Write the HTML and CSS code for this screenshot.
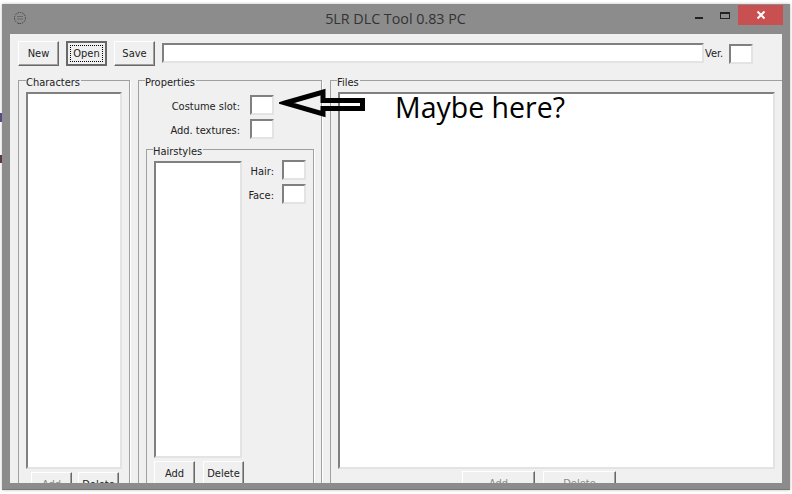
FILE: index.html
```html
<!DOCTYPE html>
<html lang="en">
<head>
    <meta charset="UTF-8">
    <meta name="viewport" content="width=device-width, initial-scale=1.0">
    <title>5LR DLC Tool 0.83 PC</title>
    <link rel="stylesheet" href="styles.css">
</head>
<body>
    <div class="window">
        <div class="titlebar">
            <svg class="app-icon" width="14" height="14" viewBox="0 0 14 14">
                <circle cx="7" cy="7" r="5.5" fill="none" stroke="#444" stroke-dasharray="1.5 1"/>
                <path d="M4.5 5.5h5M4.5 8h5M5 12.5h4" stroke="#444" stroke-dasharray="1 1" fill="none"/>
            </svg>
            <div class="title">5LR DLC Tool 0.83 PC</div>
            <div class="win-buttons">
                <div class="win-btn"><div class="min-glyph"></div></div>
                <div class="win-btn"><div class="max-glyph"></div></div>
                <div class="close-btn">
                    <svg width="10" height="10" viewBox="0 0 10 10"><path d="M1.5 1.5l7 7M8.5 1.5l-7 7" stroke="#fff" stroke-width="2"/></svg>
                </div>
            </div>
        </div>
        <div class="client">
            <div class="toolbar">
                <div class="btn">New</div>
                <div class="btn default"><span>Open</span></div>
                <div class="btn">Save</div>
                <div class="field path"></div>
                <div class="ver-label">Ver.</div>
                <div class="field small"></div>
            </div>
            <div class="panels">
                <div class="group characters">
                    <div class="legend">Characters</div>
                    <div class="field list"></div>
                    <div class="list-buttons">
                        <div class="btn disabled">Add</div>
                        <div class="btn">Delete</div>
                    </div>
                </div>
                <div class="group properties">
                    <div class="legend">Properties</div>
                    <div class="prop-row"><span>Costume slot:</span><div class="field small"></div></div>
                    <div class="prop-row"><span>Add. textures:</span><div class="field small"></div></div>
                    <div class="group hairstyles">
                        <div class="legend">Hairstyles</div>
                        <div class="hair-top">
                            <div class="field hair-list"></div>
                            <div class="hair-side">
                                <div class="prop-row"><span>Hair:</span><div class="field small"></div></div>
                                <div class="prop-row"><span>Face:</span><div class="field small"></div></div>
                            </div>
                        </div>
                        <div class="hair-buttons">
                            <div class="btn">Add</div>
                            <div class="btn">Delete</div>
                        </div>
                    </div>
                </div>
                <div class="group files">
                    <div class="legend">Files</div>
                    <div class="field list"></div>
                    <div class="files-buttons">
                        <div class="btn wide disabled">Add</div>
                        <div class="btn wide disabled">Delete</div>
                    </div>
                </div>
            </div>
        </div>
    </div>

    <!-- bits of whatever was behind the window -->
    <div class="behind behind-a"></div>
    <div class="behind behind-b"></div>

    <svg class="arrow" width="90" height="34" viewBox="0 0 90 34">
        <path d="M6 15 L44 4 L44 12.5 L83.5 12.5 L83.5 20.5 L44 20.5 L44 26 Z" fill="none" stroke="#000" stroke-width="5"/>
    </svg>
    <div class="note">Maybe here?</div>
</body>
</html>
```

FILE: styles.css
```css
html, body {
    margin: 0;
    height: 100%;
    overflow: hidden;
    background-color: #fff;
}
body {
    font-family: "DejaVu Sans", sans-serif;
    font-stretch: condensed;
    font-size: 11px;
    color: #222;
    position: relative;
}
.window {
    width: 788px;
    height: 486px;
    margin: 4px 0 0 2px;
    background-color: #8c8c8c;
    display: flex;
    flex-direction: column;
    box-sizing: border-box;
    padding: 0 8px 7px 8px;
    box-shadow: 0 0 3px rgba(0, 0, 0, 0.25), inset 0 -1px 0 #777;
}
.titlebar {
    height: 30px;
    flex: none;
    display: flex;
    margin-right: -8px;
}
.app-icon {
    margin: 7px 0 0 3px;
}
.title {
    flex: 1;
    text-align: center;
    font-family: "Open Sans", sans-serif;
    font-stretch: normal;
    font-size: 14.3px;
    line-height: 30px;
    color: #333;
    margin-left: 78px;
}
.win-buttons {
    display: flex;
    height: 20px;
    margin: 1px 7px 0 0;
}
.win-btn {
    width: 26px;
    display: flex;
    align-items: center;
    justify-content: center;
}
.min-glyph {
    width: 8px;
    height: 2px;
    background-color: #222;
    margin-top: 6px;
}
.max-glyph {
    width: 8px;
    height: 4px;
    border: 1px solid #222;
    border-top-width: 2px;
}
.close-btn {
    width: 45px;
    background-color: #c95050;
    display: flex;
    align-items: center;
    justify-content: center;
}
.client {
    flex: 1;
    background-color: #f0f0f0;
    overflow: hidden;
    min-height: 0;
    padding-left: 8px;
}
.toolbar {
    display: flex;
    height: 25px;
    margin-top: 7px;
    align-items: flex-start;
}
.btn {
    width: 41px;
    height: 25px;
    box-sizing: border-box;
    background-color: #f0f0f0;
    border: 1px solid;
    border-color: #fff #696969 #696969 #fff;
    box-shadow: inset -1px -1px 0 #a0a0a0;
    text-align: center;
    line-height: 23px;
    flex: none;
}
.toolbar .btn {
    margin-right: 7px;
}
.btn.default {
    border: 2px solid #696969;
    padding: 2px;
    box-shadow: none;
}
.btn.default span {
    display: block;
    border: 1px dotted #000;
    height: 15px;
    line-height: 15px;
}
.btn.disabled {
    color: #8a8a8a;
}
.field {
    background-color: #fff;
    box-sizing: border-box;
    border: 2px solid;
    border-color: #808080 #e3e3e3 #e3e3e3 #808080;
    flex: none;
}
.field.path {
    width: 542px;
    height: 20px;
    margin-top: 2px;
}
.ver-label {
    width: 25px;
    padding-left: 1px;
    box-sizing: border-box;
    line-height: 23px;
    margin-top: 1px;
}
.field.small {
    width: 24px;
    height: 20px;
}
.toolbar .field.small {
    margin-top: 3px;
}
.panels {
    display: flex;
    margin-top: 14px;
    gap: 8px;
}
.group {
    position: relative;
    box-sizing: border-box;
    border: 1px solid #a0a0a0;
    box-shadow: 1px 1px 0 #fff;
    height: 420px;
    flex: none;
}
.legend {
    position: absolute;
    top: -5px;
    left: 6px;
    line-height: 13px;
    background-color: #f0f0f0;
    padding-right: 1px;
}
.characters {
    width: 112px;
    padding: 11px 7px 0 7px;
}
.characters .legend {
    left: 7px;
}
.properties {
    width: 184px;
    padding: 14px 7px 0 7px;
}
.files {
    width: 452px;
    border-right: 0;
    padding: 11px 7px 0 7px;
}
.field.list {
    width: 100%;
    height: 377px;
}
.list-buttons {
    display: flex;
    gap: 6px;
    margin: 3px 0 0 5px;
}
.prop-row {
    display: flex;
    justify-content: flex-end;
    align-items: center;
    gap: 10px;
    height: 20px;
    margin-bottom: 4px;
    padding-right: 40px;
}
.prop-row span {
    line-height: 20px;
    padding-top: 4px;
}
.hairstyles {
    width: 168px;
    margin-top: 10px;
    padding: 11px 7px 0 7px;
}
.hair-top {
    display: flex;
}
.hair-list {
    width: 88px;
    height: 297px;
}
.hair-side {
    flex: 1;
    margin-top: -1px;
}
.hair-side .prop-row {
    padding-right: 0;
    gap: 8px;
}
.hair-buttons {
    display: flex;
    gap: 8px;
    margin-top: 3px;
}
.files-buttons {
    display: flex;
    gap: 8px;
    margin: 2px 0 0 124px;
}
.btn.wide {
    width: 73px;
}
.behind {
    position: absolute;
    left: 0;
    width: 2px;
}
.behind-a {
    top: 113px;
    height: 9px;
    background-color: #5a4a80;
}
.behind-b {
    top: 155px;
    height: 8px;
    background-color: #5a3a3a;
}
.arrow {
    position: absolute;
    left: 279px;
    top: 88px;
}
.note {
    position: absolute;
    left: 395px;
    top: 89px;
    font-family: "Open Sans", sans-serif;
    font-stretch: normal;
    font-size: 28.5px;
    line-height: 36px;
    color: #000;
}
```
